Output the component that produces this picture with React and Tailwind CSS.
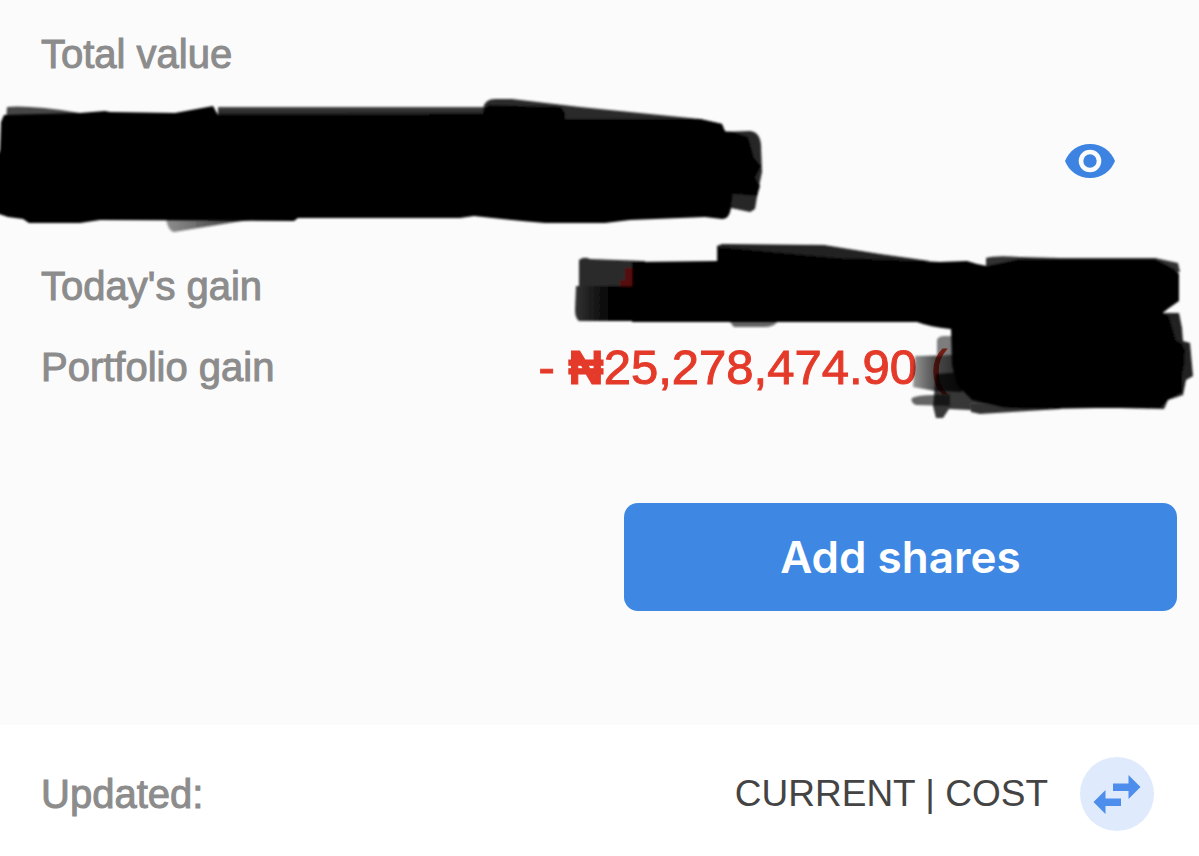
function ValueMask() {
  return (
    <svg
      className="h-[140px] w-[770px] shrink-0 overflow-visible"
      viewBox="0 91 770 140"
      role="img"
      aria-label="Hidden total value"
    >
      <defs>
        <filter id="soft-left" x="-5%" y="-10%" width="110%" height="120%">
          <feGaussianBlur stdDeviation="1.2" />
        </filter>
        <linearGradient id="fade-tail" x1="0" x2="1" y1="0" y2="0">
          <stop offset="0" stopColor="#222" stopOpacity="0.5" />
          <stop offset="1" stopColor="#000" />
        </linearGradient>
        <linearGradient id="fade-top" x1="0" x2="0" y1="0" y2="1">
          <stop offset="0" stopColor="#444" />
          <stop offset="0.35" stopColor="#0c0c0c" />
          <stop offset="1" stopColor="#000" />
        </linearGradient>
      </defs>
      <g filter="url(#soft-left)">
        <path d="M7 107 Q30 105 80 113 L100 125 L5 135Z" fill="#000" opacity="0.72" />
        <path d="M218 107 L500 107 L500 140 L218 140Z" fill="url(#fade-top)" />
        <path d="M166 219 L280 216 L235 222 L174 232 Q168 231 166 219Z" fill="url(#fade-tail)" />
        <path d="M483 108 Q485 99 495 99 L512 99 L580 107 L640 113 L700 119 L722 124 L724 135 L484 135Z" fill="#2b2b2b" />
        <path d="M483 109 L489 105 L561 107 L565 113 L565 130 L483 130Z" fill="#050505" />
        <path d="M722 132 L750 131 Q760 132 761 145 L762 172 L758 191 L755 209 L750 212 L731 208Z" fill="#252525" />
        <path d="M718 131 L733 132 L748 137 L754 158 L761 166 L755 178 L760 186 L757 196 L733 194 L722 200Z" fill="#020202" />
        <path
          d="M0 150 L1 122 L4 115 L80 113 L105 111 L110 112 L175 113 L213 106 L218 115 L480 114 L566 119 L700 119 L722 124 L725 131 L732 138 L733 192 L731 208 Q729 220 722 219 L705 217 L630 220 L605 223 L545 223 Q510 220 474 216 L460 218 L298 218 L294 221 L100 220 L80 223 L29 223 L23 219 L8 217 L-4 213 L-4 160Z"
          fill="#000"
        />
      </g>
    </svg>
  );
}

function GainMask() {
  return (
    <svg
      className="pointer-events-none absolute right-0 -top-[28px] h-[200px] w-[639px]"
      viewBox="560 230 639 200"
      role="img"
      aria-label="Hidden gain details"
    >
      <defs>
        <filter id="soft-right" x="-5%" y="-10%" width="110%" height="120%">
          <feGaussianBlur stdDeviation="1.2" />
        </filter>
        <linearGradient id="fade-mid" x1="0" x2="1" y1="0" y2="0">
          <stop offset="0" stopColor="#000" stopOpacity="0.4" />
          <stop offset="0.5" stopColor="#000" stopOpacity="0.72" />
          <stop offset="1" stopColor="#000" stopOpacity="0.85" />
        </linearGradient>
        <linearGradient id="fade-edge" x1="0" x2="1" y1="0" y2="0">
          <stop offset="0" stopColor="#333" />
          <stop offset="0.4" stopColor="#050505" />
          <stop offset="1" stopColor="#000" />
        </linearGradient>
      </defs>
      <g filter="url(#soft-right)">
        <path d="M579 260 Q584 256 590 259 L645 261 L645 292 L579 290Z" fill="#2c2c2c" />
        <path d="M625 268 H632 V286 H620 V280 H625Z" fill="#540e0b" />
        <path d="M576 286 L660 286 L660 321 L579 321 Q575 318 575 310Z" fill="url(#fade-edge)" />
        <path d="M717 246 L722 244 L824 245 L880 254 L930 261 L880 270 L717 265Z" fill="#202020" />
        <path d="M986 258 Q995 255 1020 257 L1060 258 L1155 258 L1178 263 L1180 272 L1100 280 L986 270Z" fill="#303030" />
        <path d="M730 322 L778 321 Q774 327 764 327 L734 327Z" fill="#111" opacity="0.65" />
        <path d="M632 284 L632 262 L718 261 L718 247 L835 258 Q900 260 940 262 L967 261 L977 264 L987 266 L1020 259 L1155 259 L1174 269 L1179 274 L1179 301 L1169 308 L1160 315 L1160 325 L950 329 Q930 327 917 322 L632 322Z" fill="#000" />
        <path d="M937 340 Q938 336 945 336 L960 336 L960 357 L937 355Z" fill="#000" opacity="0.5" />
        <path d="M915 356 L962 355 L962 392 L935 391 L913 387Z" fill="url(#fade-mid)" />
        <path d="M912 398 Q918 395 933 395 L950 394 L950 406 L916 405 Q910 402 912 398Z" fill="#000" opacity="0.6" />
        <path d="M936 374 L962 372 L1030 398 L1030 407 L970 410 L949 409 L943 418 L936 418 L933 406Z" fill="#000" opacity="0.78" />
        <path d="M970 404 L1060 400 L1060 409 L980 414 L971 412Z" fill="#333" />
        <path d="M1150 313 L1179 313 L1182 328 L1183 341 L1190 343 L1193 376 L1186 380 L1183 395 L1168 400 L1164 409 L1120 408Z" fill="#202020" />
        <path d="M951 328 Q962 312 990 310 L1150 306 L1169 317 L1176 341 L1181 343 L1185 350 L1184 365 L1182 375 L1182 392 L1167 400 L1160 408 L1095 408 L1040 409 L1005 408 L972 400 L957 385 L952 365Z" fill="#000" />
      </g>
    </svg>
  );
}

function EyeIcon() {
  return (
    <svg className="h-[34px] w-[50px]" viewBox="0 0 50 34" aria-hidden="true">
      <path d="M0 17 C4 7 13 0 25 0 S46 7 50 17 C46 27 37 34 25 34 S4 27 0 17Z" fill="#3c83e2" />
      <circle cx="25" cy="17" r="9" fill="#3c83e2" stroke="#fbfbfb" strokeWidth="4.6" />
    </svg>
  );
}

function SwapIcon() {
  return (
    <svg className="h-[40px] w-[48px]" viewBox="0 0 48 40" aria-hidden="true">
      <path d="M20 9.5 H35.500 V1 L47.500 13 L35.500 25 V17 H20Z" fill="#4d8eed" />
      <path d="M28 24.500 H12.500 V16 L0.500 28 L12.500 40 V32 H28Z" fill="#4d8eed" />
    </svg>
  );
}

const label = "text-[40px] leading-[48px] text-[#8c8c8c]";

export default function App() {
  return (
    <main className="min-h-screen bg-white font-['Liberation_Sans',Arial,sans-serif]">
      <section className="overflow-hidden bg-[#fbfbfb] pt-[30px] pb-[114px]">
        <h1 className={`${label} pl-[41px] [-webkit-text-stroke:1px_#8c8c8c]`}>Total value</h1>
        <div className="mt-[13px] flex items-center justify-between pr-[84px]">
          <ValueMask />
          <button type="button" aria-label="Toggle value visibility">
            <EyeIcon />
          </button>
        </div>
        <div className="relative mt-[27px] flex flex-col gap-[25px] pl-[41px]">
          <div className="flex h-[56px] items-center">
            <span className={`${label} [-webkit-text-stroke:1px_#8c8c8c]`}>Today's gain</span>
          </div>
          <div className="flex h-[56px] items-center justify-between pr-[252px]">
            <span className={`${label} [-webkit-text-stroke:1px_#8c8c8c]`}>Portfolio gain</span>
            <span className="text-[49px] leading-[56px] whitespace-nowrap text-[#e43a2a] [-webkit-text-stroke:1px_#e43a2a]">
              - <span className="font-bold">₦</span>25,278,474.90 (
            </span>
          </div>
          <GainMask />
        </div>
        <div className="mt-[108px] flex justify-end pr-[22px]">
          <button
            type="button"
            className="h-[108px] w-[47%] rounded-[14px] bg-[#3e88e3] font-['Inter',sans-serif] text-[44px] font-semibold text-white"
          >
            Add shares
          </button>
        </div>
      </section>
      <footer className="flex items-center justify-between pt-[32px] pr-[45px] pb-[25px] pl-[41px]">
        <span className={`${label} [-webkit-text-stroke:1px_#8c8c8c]`}>Updated:</span>
        <div className="flex items-center gap-[32px]">
          <span className="text-[37px] leading-[48px] text-[#444444]">CURRENT | COST</span>
          <button
            type="button"
            aria-label="Swap current and cost"
            className="flex size-[74px] items-center justify-center rounded-full bg-[#dfebfc]"
          >
            <SwapIcon />
          </button>
        </div>
      </footer>
    </main>
  );
}
